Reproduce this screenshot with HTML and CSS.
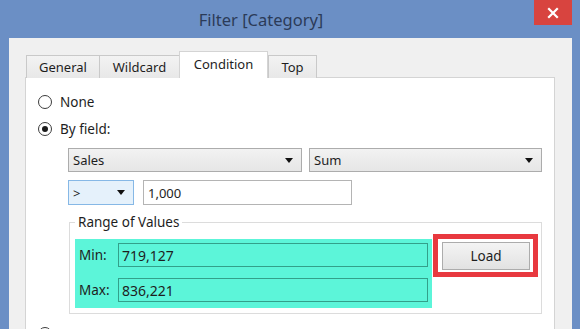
FILE: index.html
```html
<!DOCTYPE html>
<html lang="en">
<head>
    <meta charset="UTF-8">
    <meta name="viewport" content="width=device-width, initial-scale=1.0">
    <title>Filter [Category]</title>
    <link rel="stylesheet" href="styles.css">
</head>
<body>
    <div class="window">
        <div class="titlebar">
            <div class="title">Filter [Category]</div>
            <div class="close-btn">
                <svg width="12" height="12" viewBox="0 0 12 12">
                    <path d="M2 2 L10 10 M10 2 L2 10" stroke="#fff" stroke-width="2.2" stroke-linecap="square"/>
                </svg>
            </div>
        </div>

        <div class="client">
            <div class="tabs">
                <div class="tab tab-general">General</div>
                <div class="tab tab-wildcard">Wildcard</div>
                <div class="tab tab-condition active">Condition</div>
                <div class="tab tab-top">Top</div>
            </div>

            <div class="panel">
                <label class="radio-row">
                    <span class="radio"></span>
                    <span>None</span>
                </label>
                <label class="radio-row">
                    <span class="radio checked"></span>
                    <span>By field:</span>
                </label>

                <div class="field-row first">
                    <div class="select select-field">
                        <span>Sales</span>
                        <span class="arrow"></span>
                    </div>
                    <div class="select select-agg">
                        <span>Sum</span>
                        <span class="arrow"></span>
                    </div>
                </div>

                <div class="field-row second">
                    <div class="select select-op">
                        <span>&gt;</span>
                        <span class="arrow"></span>
                    </div>
                    <div class="textbox value-box">1,000</div>
                </div>

                <fieldset class="range">
                    <legend>Range of Values</legend>
                    <div class="range-row">
                        <div class="range-fields">
                            <span class="range-label">Min:</span>
                            <div class="range-box">719,127</div>
                            <span class="range-label">Max:</span>
                            <div class="range-box">836,221</div>
                        </div>
                        <div class="load-mark">
                            <button class="load-btn">Load</button>
                        </div>
                    </div>
                </fieldset>

                <!-- next option row, only its radio shows above the fold -->
                <div class="radio-row formula">
                    <span class="radio"></span>
                </div>
            </div>
        </div>
    </div>
</body>
</html>
```

FILE: styles.css
```css
* {
    margin: 0;
    padding: 0;
    box-sizing: border-box;
}

body {
    font-family: "Noto Sans", "Open Sans", sans-serif;
    font-size: 13px;
    color: #1e1e1e;
    overflow: hidden;
}

.window {
    width: 580px;
    height: 329px;
    overflow: hidden;
    background: #6b8fc5;
    padding: 0 8px 0 9px;
    display: flex;
    flex-direction: column;
}

.titlebar {
    height: 38px;
    flex-shrink: 0;
    display: flex;
}

.title {
    flex: 1;
    text-align: center;
    padding-right: 21px;
    padding-top: 8px;
    font-size: 16.5px;
    color: #2b3b58;
}

.close-btn {
    width: 38px;
    height: 25px;
    background: #d8443f;
    display: flex;
    align-items: center;
    justify-content: center;
}

.client {
    flex: 1;
    background: #f0f0f0;
    padding: 14px 17px 0 16px;
    display: flex;
    flex-direction: column;
    min-height: 0;
}

.tabs {
    height: 26px;
    display: flex;
    align-items: flex-end;
    margin-bottom: -1px;
    position: relative;
    z-index: 1;
}

.tab {
    height: 23px;
    border: 1px solid #c9c9c9;
    border-bottom: none;
    border-right: none;
    background: linear-gradient(#f3f3f3, #e8e8e8);
    text-align: center;
    line-height: 22px;
}

.tab-general {
    width: 73px;
    margin-left: 1px;
}

.tab-wildcard {
    width: 80px;
}

.tab-condition {
    width: 89px;
}

.tab-top {
    width: 49px;
    border-right: 1px solid #c9c9c9;
}

.tab.active {
    height: 27px;
    background: #fff;
    border: 1px solid #d4d4d4;
    border-bottom: none;
    line-height: 24px;
}

.panel {
    flex: 1;
    background: #fff;
    border: 1px solid #d4d4d4;
    border-bottom: none;
    padding: 12px 0 0 12px;
}

.radio-row {
    height: 24px;
    display: flex;
    align-items: center;
    gap: 8px;
    font-size: 13.5px;
}

.radio-row + .radio-row {
    margin-top: 3px;
}

.radio {
    width: 14px;
    height: 14px;
    border: 1px solid #3c3c3c;
    border-radius: 50%;
    background: #fff;
    display: flex;
    align-items: center;
    justify-content: center;
}

.radio.checked::after {
    content: "";
    width: 6px;
    height: 6px;
    border-radius: 50%;
    background: #1a1a1a;
}

.field-row {
    display: flex;
    margin-left: 30px;
}

.field-row.first {
    margin-top: 7px;
    gap: 7px;
}

.field-row.second {
    margin-top: 8px;
    gap: 9px;
}

.select {
    height: 24px;
    border: 1px solid #acacac;
    background: linear-gradient(#f2f2f2, #e6e6e6);
    display: flex;
    align-items: center;
    justify-content: space-between;
    padding: 0 8px 0 4px;
}

.select-field {
    width: 234px;
}

.select-agg {
    width: 233px;
}

.select-op {
    width: 66px;
    height: 25px;
    background: #e5f1fb;
    border-color: #86b8e6;
}

.arrow {
    width: 0;
    height: 0;
    border-left: 4.5px solid transparent;
    border-right: 4.5px solid transparent;
    border-top: 5px solid #111;
}

.textbox {
    height: 25px;
    border: 1px solid #b4b4b4;
    background: #fff;
    display: flex;
    align-items: center;
    padding-left: 4px;
}

.value-box {
    width: 209px;
}

.range {
    width: 473px;
    margin: 9px 0 0 31px;
    border: 1px solid #dcdcdc;
    padding: 4px 3px 5px 5px;
}

.range legend {
    padding: 0 3px;
    line-height: 16px;
    font-size: 13.5px;
}

.range-row {
    display: flex;
    align-items: flex-start;
    gap: 1px;
}

.range-fields {
    width: 357px;
    margin-top: 5px;
    background: #5cf5d9;
    padding: 4px 4px 6px 4px;
    display: grid;
    grid-template-columns: 39px 1fr;
    row-gap: 11px;
    align-items: center;
}

.range-label {
    font-size: 13.5px;
}

.range-box {
    height: 24px;
    border: 1px solid #33a08a;
    padding-left: 3px;
    display: flex;
    align-items: center;
    font-size: 14px;
}

.load-mark {
    border: 5px solid #e8393f;
    padding: 3px 3px 2px 4px;
}

.load-btn {
    width: 88px;
    height: 28px;
    border: 1px solid #acacac;
    background: linear-gradient(#f4f4f4, #e2e2e2);
    font-family: inherit;
    font-size: 13.5px;
    color: #1e1e1e;
    display: block;
}

.radio-row.formula {
    margin-top: 8px;
}
```
